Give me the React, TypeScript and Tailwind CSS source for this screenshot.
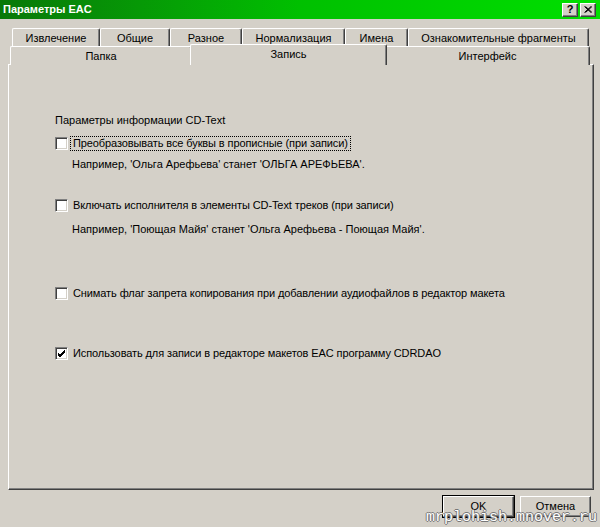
// @ts-nocheck
import React from 'react';

const font = { fontFamily: '"Liberation Sans", Arial, sans-serif' };

function Tab({ label, width, selected = false }: { label: string; width: number; selected?: boolean }) {
  return (
    <div
      className={`flex items-center justify-center border-l border-t border-r border-l-white border-t-white border-r-[#404040] rounded-t-[2px] text-[11px] text-black bg-[#d4d0c8] shadow-[inset_-1px_0_0_#808080] ${
        selected ? 'relative z-10 -mt-[2px] -mx-[2px] h-[21px] pb-[2px]' : 'h-[19px]'
      }`}
      style={{ width }}
    >
      {label}
    </div>
  );
}

function Checkbox({ checked = false }: { checked?: boolean }) {
  return (
    <span className="w-[13px] h-[13px] shrink-0 bg-white border border-t-[#808080] border-l-[#808080] border-b-white border-r-white shadow-[inset_1px_1px_0_#404040,inset_-1px_-1px_0_#d4d0c8] flex items-center justify-center">
      {checked && (
        <svg width="9" height="9" viewBox="0 0 9 9">
          <path d="M1 4 L3 6 L8 1 M1 5 L3 7 L8 2 M1 6 L3 8 L8 3" stroke="#000" strokeWidth="1" fill="none" />
        </svg>
      )}
    </span>
  );
}

function Option({ label, checked = false, focused = false }: { label: string; checked?: boolean; focused?: boolean }) {
  return (
    <div className="flex items-center h-[15px]">
      <Checkbox checked={checked} />
      <span className={`ml-[2px] px-[2px] leading-[13px] text-[11px] text-black tracking-[-0.1px] border ${focused ? 'border-dotted border-black' : 'border-transparent'}`}>
        {label}
      </span>
    </div>
  );
}

function WinButton({ label, isDefault = false }: { label: string; isDefault?: boolean }) {
  return (
    <div className={`w-[73px] h-[23px] ${isDefault ? 'border border-black' : 'border border-transparent'}`}>
      <div className="w-full h-full bg-[#d4d0c8] border border-t-white border-l-white border-b-[#404040] border-r-[#404040] shadow-[inset_-1px_-1px_0_#808080] flex items-center justify-center text-[11px] text-black">
        {label}
      </div>
    </div>
  );
}

export default function App() {
  return (
    <div className="w-[600px] h-[527px] bg-[#d4d0c8] relative overflow-hidden select-none" style={font}>
      {/* Title bar */}
      <div className="h-[19px] flex items-center justify-between pl-[3px] pr-[4px] bg-gradient-to-r from-[#087808] via-[#00c000] to-[#00e000]">
        <span className="text-white font-bold text-[11px]">Параметры EAC</span>
        <div className="flex gap-[2px]">
          <div className="w-[16px] h-[14px] bg-[#d4d0c8] border border-t-white border-l-white border-b-[#404040] border-r-[#404040] shadow-[inset_-1px_-1px_0_#808080] flex items-center justify-center text-[11px] font-bold leading-none text-black">?</div>
          <div className="w-[16px] h-[14px] bg-[#d4d0c8] border border-t-white border-l-white border-b-[#404040] border-r-[#404040] shadow-[inset_-1px_-1px_0_#808080] flex items-center justify-center">
            <svg width="8" height="7" viewBox="0 0 8 7">
              <path d="M0.5 0.5 L7 6.5 M1.5 0.5 L8 6.5 M7 0.5 L0.5 6.5 M8 0.5 L1.5 6.5" stroke="#000" strokeWidth="1" />
            </svg>
          </div>
        </div>
      </div>

      {/* Tabs */}
      <div className="pt-[9px]">
        <div className="flex pl-[12px]">
          <Tab label="Извлечение" width={88} />
          <Tab label="Общие" width={70} />
          <Tab label="Разное" width={72} />
          <Tab label="Нормализация" width={103} />
          <Tab label="Имена" width={63} />
          <Tab label="Ознакомительные фрагменты" width={181} />
        </div>
        <div className="flex pl-[10px] -mt-[1px] relative">
          <Tab label="Папка" width={182} />
          <Tab label="Запись" width={197} selected />
          <Tab label="Интерфейс" width={205} />
        </div>

        {/* Page */}
        <div className="ml-[8px] -mt-[1px] w-[586px] h-[426px] border border-t-white border-l-white border-b-[#404040] border-r-[#404040] shadow-[inset_-1px_-1px_0_#808080] pl-[46px] pt-[49px] text-[11px] text-black">
          <div className="h-[13px] leading-[13px]">Параметры информации CD-Text</div>
          <div className="mt-[9px]">
            <Option label="Преобразовывать все буквы в прописные (при записи)" focused />
          </div>
          <div className="mt-[7px] ml-[17px] leading-[13px]">Например, 'Ольга Арефьева' станет 'ОЛЬГА АРЕФЬЕВА'.</div>
          <div className="mt-[27px]">
            <Option label="Включать исполнителя в элементы CD-Text треков (при записи)" />
          </div>
          <div className="mt-[10px] ml-[17px] leading-[13px]">Например, 'Поющая Майя' станет 'Ольга Арефьева - Поющая Майя'.</div>
          <div className="mt-[50px]">
            <Option label="Снимать флаг запрета копирования при добавлении аудиофайлов в редактор макета" />
          </div>
          <div className="mt-[45px]">
            <Option label="Использовать для записи в редакторе макетов EAC программу CDRDAO" checked />
          </div>
        </div>

        {/* Dialog buttons */}
        <div className="flex justify-end gap-[4px] pr-[8px] mt-[5px]">
          <WinButton label="OK" isDefault />
          <WinButton label="Отмена" />
        </div>
      </div>

      {/* Site stamp */}
      <div
        className="absolute right-[3px] bottom-[1px] text-[15px] leading-[17px] text-white"
        style={{ fontFamily: '"Liberation Mono", "Courier New", monospace', textShadow: '1px 0 #777, -1px 0 #777, 0 1px #777, 0 -1px #777' }}
      >
        mrplohish.mnover.ru
      </div>
    </div>
  );
}
